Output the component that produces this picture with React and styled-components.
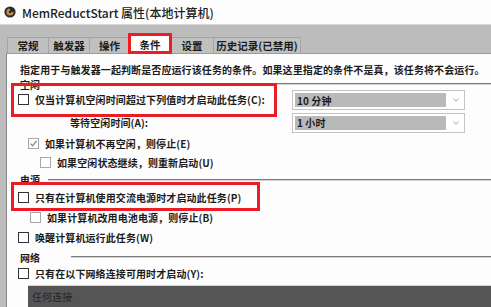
import styled, { createGlobalStyle } from "styled-components";

const GlobalStyle = createGlobalStyle`
  html, body {
    margin: 0;
    padding: 0;
    background: #fdfdfd;
  }
  body {
    width: 491px;
    height: 307px;
    overflow: hidden;
    font-family: "Noto Sans CJK SC", "Noto Sans", sans-serif;
    color: #1b1b1b;
  }
`;

const Window = styled.div`
  width: 491px;
  height: 307px;
  display: flex;
  flex-direction: column;
  background: #fdfdfd;
  overflow: hidden;
`;

const TitleBar = styled.div`
  height: 24px;
  flex: none;
  display: flex;
  align-items: center;
  gap: 6px;
  padding-left: 4px;
  font-size: 12px;
  font-weight: 500;
  color: #222;
`;

const Frame = styled.div`
  flex: 1;
  display: flex;
  flex-direction: column;
  background: #bcbcbc;
  border-top: 1px solid #d8d8d8;
`;

const TabStrip = styled.div`
  height: 28px;
  flex: none;
  display: flex;
  align-items: flex-end;
  padding-left: 8px;
`;

const Tab = styled.div`
  position: relative;
  width: ${(p) => p.$w}px;
  height: ${(p) => (p.$active ? 20 : 16)}px;
  box-sizing: border-box;
  display: flex;
  align-items: center;
  justify-content: center;
  font-size: 10.5px;
  font-weight: 700;
  background: ${(p) => (p.$active ? "#fdfdfd" : "#c0c0c0")};
  border: 1px solid ${(p) => (p.$active ? "#9a9a9a" : "#a4a4a4")};
  border-bottom: none;
  margin-bottom: ${(p) => (p.$active ? "-1px" : "0")};
  z-index: ${(p) => (p.$active ? 2 : 1)};
  margin-left: -1px;

  ${(p) =>
    p.$active &&
    `
    &::after {
      content: "";
      position: absolute;
      left: -2px;
      right: -2px;
      top: -2px;
      bottom: 0;
      border: 3px solid #ec1c24;
    }
  `}
`;

const Panel = styled.div`
  flex: 1;
  margin-left: 6px;
  background: #fdfdfd;
  border-left: 1px solid #888;
  border-top: 1px solid #9c9c9c;
  display: flex;
  flex-direction: column;
  padding-top: 5px;
  font-size: 10px;
  font-weight: 700;
  letter-spacing: 0.1px;
  white-space: nowrap;
`;

const Row = styled.div`
  height: ${(p) => p.$h}px;
  flex: none;
  display: flex;
  align-items: center;
  padding-left: ${(p) => p.$indent || 0}px;
`;

const FieldRow = styled.div`
  height: ${(p) => p.$h}px;
  flex: none;
  display: grid;
  grid-template-columns: 1fr 173px;
  align-items: center;
  padding-left: ${(p) => p.$indent || 0}px;
  padding-right: 26px;
`;

const GroupHead = styled.div`
  height: ${(p) => p.$h}px;
  flex: none;
  display: flex;
  align-items: center;
  padding-left: 13px;
  gap: ${(p) => p.$gap}px;
`;

const Rule = styled.div`
  flex: 1;
  height: 1px;
  background: #7c7c7c;
  border-bottom: 1px solid #d4d4d4;
`;

const Check = styled.span`
  position: relative;
  flex: none;
  width: 11px;
  height: 11px;
  box-sizing: border-box;
  border: 1px solid ${(p) => (p.$dim ? "#a8a8a8" : "#333")};
  background: #fff;
  margin-right: 6px;
`;

const CheckLabel = styled.label`
  position: relative;
  display: inline-flex;
  align-items: center;

  ${(p) =>
    p.$marked &&
    `
    &::after {
      content: "";
      position: absolute;
      left: -7px;
      right: ${p.$right}px;
      top: ${p.$top}px;
      bottom: ${p.$bottom}px;
      border: 3px solid #ec1c24;
    }
  `}
`;

const Select = styled.div`
  height: ${(p) => p.$h}px;
  box-sizing: border-box;
  border: 1px solid #c4c4c4;
  background: #fff;
  display: flex;
  align-items: center;
  padding: 2px;
  gap: 4px;
  font-weight: 700;
`;

const SelectValue = styled.div`
  flex: 1;
  height: 100%;
  background: #b9b9b9;
  display: flex;
  align-items: center;
  padding-left: 2px;
`;

const Chevron = styled.span`
  width: 12px;
  display: flex;
  justify-content: center;
`;

const NetSelect = styled.div`
  margin-left: 21px;
  margin-top: 4px;
  flex: 1;
  background: #555;
  border-top: 1px solid #d6d3c8;
  display: flex;
  align-items: center;
  padding-left: 4px;
  color: #262626;
  font-weight: 400;
  font-size: 10px;
`;

function AppIcon() {
  return (
    <svg width="12" height="12" viewBox="0 0 12 12">
      <circle cx="6" cy="6" r="5.6" fill="#2b2b2b" />
      <path d="M6 2.4 A3.6 3.6 0 1 0 9.6 6 L6 6 Z" fill="#c98a45" />
      <circle cx="6" cy="6" r="1.2" fill="#2b2b2b" />
    </svg>
  );
}

function CheckBox({ checked, dim }) {
  return (
    <Check $dim={dim}>
      {checked && (
        <svg
          width="9"
          height="9"
          viewBox="0 0 9 9"
          style={{ position: "absolute", left: 0, top: 0 }}
        >
          <path d="M1.5 4.6 L3.6 6.7 L7.6 1.8" fill="none" stroke="#8a8a8a" strokeWidth="1.3" />
        </svg>
      )}
    </Check>
  );
}

function Dropdown({ value, h }) {
  return (
    <Select $h={h}>
      <SelectValue>{value}</SelectValue>
      <Chevron>
        <svg width="6" height="4" viewBox="0 0 6 4">
          <path d="M0.5 0.8 L3 3.2 L5.5 0.8" fill="none" stroke="#9a9a9a" strokeWidth="0.9" />
        </svg>
      </Chevron>
    </Select>
  );
}

const tabs = [
  { label: "常规", w: 42 },
  { label: "触发器", w: 42 },
  { label: "操作", w: 41 },
  { label: "条件", w: 42, active: true },
  { label: "设置", w: 44 },
  { label: "历史记录(已禁用)", w: 88 },
];

export default function App() {
  return (
    <>
      <GlobalStyle />
      <Window>
        <TitleBar>
          <AppIcon />
          <span>MemReductStart 属性(本地计算机)</span>
        </TitleBar>
        <Frame>
          <TabStrip>
            {tabs.map((t) => (
              <Tab key={t.label} $w={t.w} $active={t.active}>
                {t.label}
              </Tab>
            ))}
          </TabStrip>
          <Panel>
            <Row $h={20} $indent={13}>
              指定用于与触发器一起判断是否应运行该任务的条件。如果这里指定的条件不是真，该任务将不会运行。
            </Row>
            <GroupHead $h={10} $gap={8}>
              空闲
              <Rule />
            </GroupHead>
            <FieldRow $h={22} $indent={11}>
              <div>
                <CheckLabel $marked $right={-12} $top={-9} $bottom={-10}>
                  <CheckBox />
                  仅当计算机空闲时间超过下列值时才启动此任务(C):
                </CheckLabel>
              </div>
              <Dropdown value="10 分钟" h={20} />
            </FieldRow>
            <FieldRow $h={23} $indent={63}>
              <span>等待空闲时间(A):</span>
              <Dropdown value="1 小时" h={20} />
            </FieldRow>
            <Row $h={19} $indent={21}>
              <CheckBox checked dim />
              如果计算机不再空闲，则停止(E)
            </Row>
            <Row $h={18} $indent={33}>
              <CheckBox dim />
              如果空闲状态继续，则重新启动(U)
            </Row>
            <GroupHead $h={17} $gap={8}>
              电源
              <Rule />
            </GroupHead>
            <Row $h={19} $indent={11}>
              <CheckLabel $marked $right={-19} $top={-8} $bottom={-6}>
                <CheckBox />
                只有在计算机使用交流电源时才启动此任务(P)
              </CheckLabel>
            </Row>
            <Row $h={20} $indent={23}>
              <CheckBox dim />
              如果计算机改用电池电源，则停止(B)
            </Row>
            <Row $h={21} $indent={11}>
              <CheckBox />
              唤醒计算机运行此任务(W)
            </Row>
            <GroupHead $h={18} $gap={31}>
              网络
              <Rule />
            </GroupHead>
            <Row $h={15} $indent={11}>
              <CheckBox />
              只有在以下网络连接可用时才启动(Y):
            </Row>
            <NetSelect>任何连接</NetSelect>
          </Panel>
        </Frame>
      </Window>
    </>
  );
}
